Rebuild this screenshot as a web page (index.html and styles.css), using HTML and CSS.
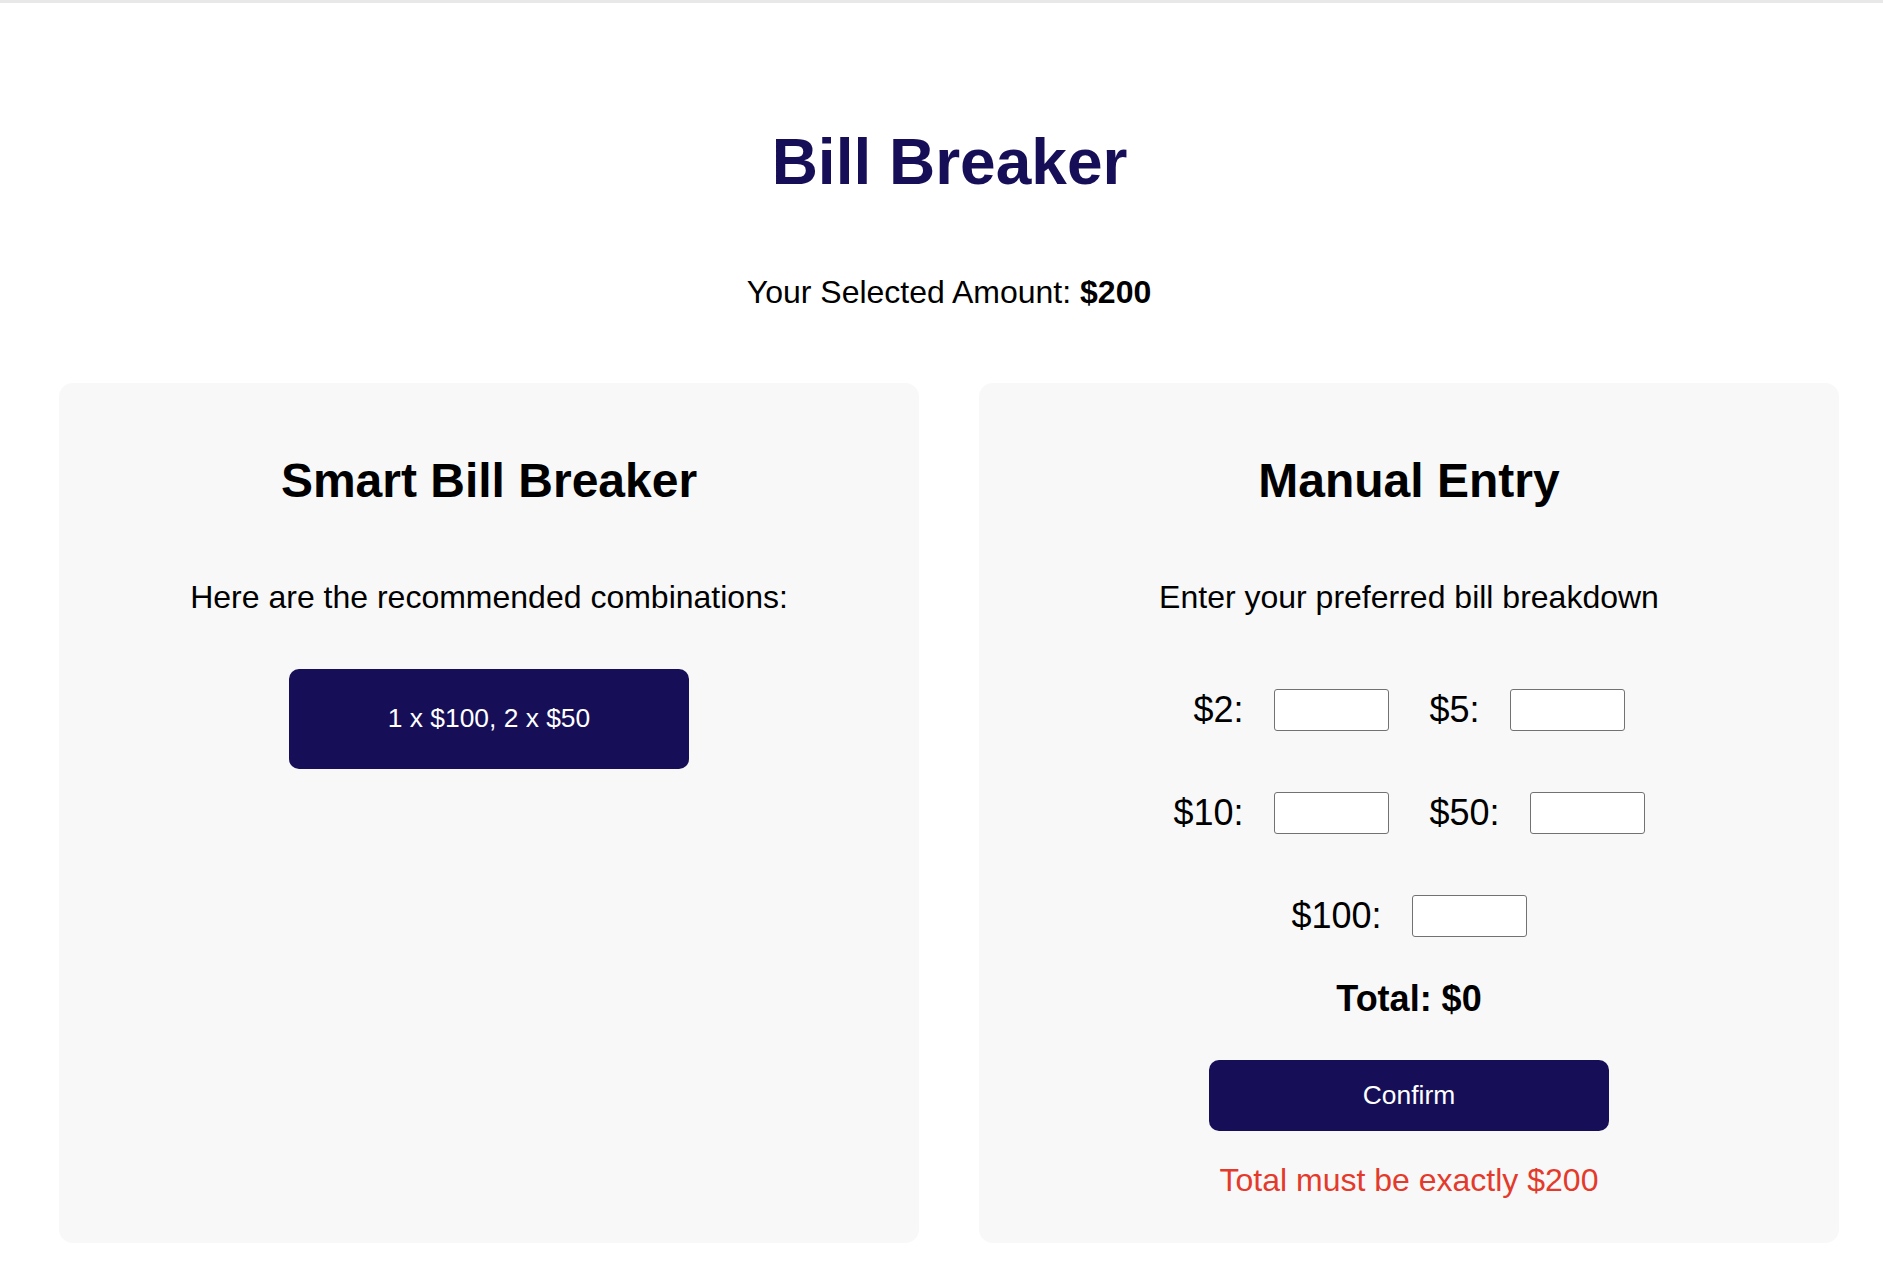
FILE: index.html
```html
<!DOCTYPE html>
<html lang="en">
<head>
<meta charset="utf-8">
<title>Bill Breaker</title>
<link rel="stylesheet" href="styles.css">
</head>
<body>
<div class="topbar"></div>
<main class="page">
  <h1 class="title">Bill Breaker</h1>
  <p class="amount">Your Selected Amount: <strong>$200</strong></p>
  <div class="cards">
    <section class="card">
      <h2 class="card-title">Smart Bill Breaker</h2>
      <p class="card-text">Here are the recommended combinations:</p>
      <button class="combo-btn">1 x $100, 2 x $50</button>
    </section>
    <section class="card">
      <h2 class="card-title">Manual Entry</h2>
      <p class="card-text">Enter your preferred bill breakdown</p>
      <div class="fields">
        <div class="field-row">
          <label class="field"><span class="field-label">$2:</span><input class="field-input" type="text"></label>
          <label class="field"><span class="field-label">$5:</span><input class="field-input" type="text"></label>
        </div>
        <div class="field-row">
          <label class="field"><span class="field-label">$10:</span><input class="field-input" type="text"></label>
          <label class="field"><span class="field-label">$50:</span><input class="field-input" type="text"></label>
        </div>
        <div class="field-row">
          <label class="field"><span class="field-label">$100:</span><input class="field-input" type="text"></label>
        </div>
      </div>
      <p class="total">Total: $0</p>
      <button class="confirm-btn">Confirm</button>
      <p class="error">Total must be exactly $200</p>
    </section>
  </div>
</main>
</body>
</html>
```

FILE: styles.css
```css
* {
  box-sizing: border-box;
}

html, body {
  margin: 0;
  padding: 0;
  background: #ffffff;
}

body {
  font-family: "Liberation Sans", Arial, sans-serif;
  color: #000000;
}

.topbar {
  height: 3px;
  background: #e8e8e8;
}

.page {
  padding: 123px 44px 18px 59px;
}

.title {
  margin: 0;
  text-align: center;
  font-size: 64px;
  font-weight: 700;
  line-height: 73.5px;
  color: #160f57;
  padding-left: 1px;
}

.amount {
  margin: 74px 0 0;
  text-align: center;
  font-size: 32px;
  line-height: 36.4px;
  padding-left: 0;
}

.amount strong {
  font-weight: 700;
}

.cards {
  margin-top: 73px;
  display: grid;
  grid-template-columns: 860px 860px;
  column-gap: 60px;
}

.card {
  background: #f8f8f8;
  border-radius: 14px;
  padding: 70px 30px 45px;
  display: flex;
  flex-direction: column;
  align-items: center;
}

.card-title {
  margin: 0;
  font-size: 48px;
  font-weight: 700;
  line-height: 55.2px;
  text-align: center;
}

.card-text {
  margin: 71px 0 0;
  font-size: 32px;
  line-height: 36.4px;
  text-align: center;
}

.combo-btn,
.confirm-btn {
  width: 400px;
  border: none;
  border-radius: 10px;
  background: #160f57;
  color: #ffffff;
  font-family: "Liberation Sans", Arial, sans-serif;
  font-size: 26.4px;
  padding: 0;
  cursor: pointer;
}

.combo-btn {
  margin-top: 53px;
  height: 100px;
}

.fields {
  margin-top: 73px;
  display: flex;
  flex-direction: column;
  align-items: center;
  gap: 61px;
}

.field-row {
  display: flex;
  justify-content: center;
  align-items: center;
  gap: 41px;
}

.field {
  display: flex;
  align-items: center;
  gap: 30px;
}

.field-label {
  font-size: 36px;
  line-height: 41.4px;
}

.field-input {
  width: 115px;
  height: 42px;
  border: 1px solid #727272;
  border-radius: 3px;
  background: #ffffff;
  padding: 0 4px;
  font-size: 20px;
  font-family: "Liberation Sans", Arial, sans-serif;
}

.total {
  margin: 41px 0 0;
  font-size: 36px;
  font-weight: 700;
  line-height: 41.4px;
}

.confirm-btn {
  margin-top: 41px;
  height: 71px;
}

.error {
  margin: 31px 0 0;
  font-size: 32px;
  line-height: 36.4px;
  color: #e43a2c;
}
```
